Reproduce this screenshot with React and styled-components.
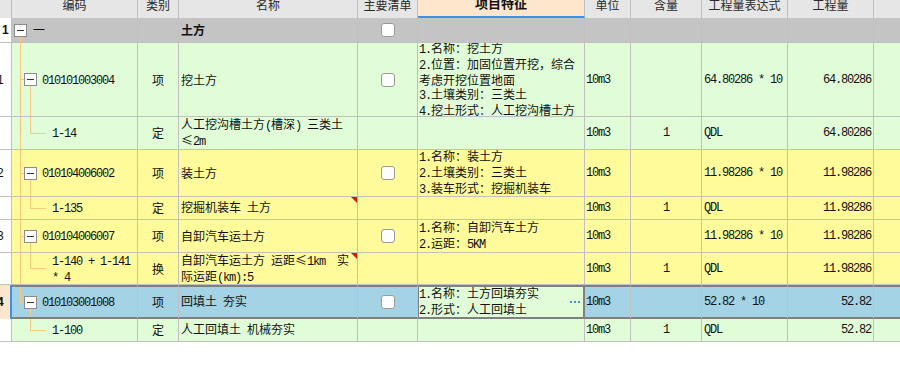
import React from 'react';
import styled, { createGlobalStyle, css } from 'styled-components';

const C = {
  border: '#c0c0c0',
  header: '#e6e6e6',
  group: '#c4c4c4',
  green: '#e1fdd8',
  yellow: '#fffb9b',
  blue: '#a3d3e5',
  tree: '#fdc77c',
  dark: '#808080',
  peach: '#fde6cb',
  accent: '#3d8fe8',
  text: '#111',
};

const GlobalStyle = createGlobalStyle`
  html, body { margin: 0; padding: 0; background: #fff; }
  body {
    font-family: "Noto Sans CJK SC", "Noto Sans", sans-serif;
    font-size: 12px;
    color: ${C.text};
  }
`;

const COLS = '12px 126px 41px 179px 60px 167px 46px 71px 86px 86px 26px';

const Table = styled.div`
  width: 900px;
`;

const Row = styled.div`
  display: grid;
  grid-template-columns: ${COLS};
  height: ${(p) => p.$h}px;
  background: ${(p) => p.$bg};
`;

const Cell = styled.div`
  box-sizing: border-box;
  display: flex;
  align-items: center;
  justify-content: ${(p) =>
    p.$align === 'center' ? 'center' : p.$align === 'right' ? 'flex-end' : 'flex-start'};
  padding: 0 ${(p) => p.$pr ?? 0}px 0 ${(p) => p.$pl ?? 0}px;
  border-right: 1px solid ${C.border};
  border-bottom: 1px solid ${C.border};
  overflow: hidden;
  position: relative;
  line-height: 14px;
  white-space: pre-wrap;
  font-weight: ${(p) => (p.$bold ? 700 : 400)};
  ${(p) =>
    p.$sel &&
    css`
      border-top: 2px solid ${C.dark};
      border-bottom: 2px solid ${C.dark};
    `}
  ${(p) =>
    p.$edit &&
    css`
      background: ${C.green};
      border-right: 2px solid ${C.dark};
      box-shadow: inset 1px 0 0 ${C.dark};
    `}
  ${(p) =>
    p.$last &&
    css`
      border-right: none;
    `}
`;

const HeadCell = styled(Cell)`
  border-bottom: none;
  align-items: flex-start;
  justify-content: center;
  background: ${(p) => (p.$focus ? C.peach : C.header)};
  color: #2a2a2a;
  line-height: 12px;
  ${(p) =>
    p.$focus &&
    css`
      border-bottom: 2px solid ${C.accent};
      font-weight: 700;
      font-size: 13px;
      color: #111;
    `}
`;

const HeadLabel = styled.span`
  margin-top: ${(p) => (p.$focus ? -3 : -1)}px;
`;

const NumCell = styled(Cell)`
  background: ${(p) => (p.$selRow ? C.peach : '#fff')};
  font-family: "Liberation Sans", sans-serif;
  font-weight: ${(p) => (p.$strong ? 700 : 400)};
  ${(p) =>
    p.$selRow &&
    css`
      border-right: 2px solid ${C.accent};
      border-bottom: none;
    `}
`;

const NumLabel = styled.span`
  margin-left: ${(p) => p.$shift}px;
  font-size: 12px;
`;

const CodeCell = styled(Cell)`
  align-items: stretch;
`;

const treeLine = `linear-gradient(${C.tree}, ${C.tree})`;

const Gutter = styled.div`
  flex: none;
  width: ${(p) => p.$w}px;
  background: ${({ $v, $vx, $h0, $h1 }) => {
    const layers = [];
    if ($v === 'full') layers.push(`${treeLine} ${$vx}px 0 / 1px 100% no-repeat`);
    if ($v === 'top') layers.push(`${treeLine} ${$vx}px 0 / 1px 50% no-repeat`);
    if ($h1) layers.push(`${treeLine} ${$h0}px 50% / ${$h1 - $h0}px 1px no-repeat`);
    return layers.length ? layers.join(', ') : 'none';
  }};
`;

const ToggleCol = styled.div`
  flex: none;
  width: 13px;
  margin-left: ${(p) => p.$ml || 0}px;
  display: flex;
  flex-direction: column;
`;

const Stem = styled.div`
  flex: 1;
  background: ${(p) => (p.$line ? `${treeLine} 6px 0 / 1px 100% no-repeat` : 'none')};
`;

const Toggle = styled.div`
  flex: none;
  box-sizing: border-box;
  width: 13px;
  height: 13px;
  border: 1px solid #8c8c8c;
  background: #fff;
  display: flex;
  align-items: center;
  justify-content: center;
  &::after {
    content: '';
    width: 7px;
    height: 1px;
    background: #333;
  }
`;

const CodeText = styled.span`
  align-self: center;
  margin-left: ${(p) => p.$ml || 0}px;
`;

const Lat = styled.span`
  font-family: "Liberation Mono", "DejaVu Sans Mono", monospace;
  font-size: 12px;
  letter-spacing: -1.2px;
`;

const Check = styled.span`
  flex: none;
  box-sizing: border-box;
  width: 14px;
  height: 14px;
  border: 1px solid #9a9a9a;
  border-radius: 3px;
  background: #fff;
`;

const Mark = styled.span`
  position: absolute;
  top: 0;
  right: 0;
  width: 0;
  height: 0;
  border-top: 6px solid #e81010;
  border-left: 6px solid transparent;
`;

const Dots = styled.span`
  flex: none;
  margin-left: auto;
  margin-right: 3px;
  width: 10px;
  height: 2px;
  background: linear-gradient(90deg, #4a8fdc 2px, transparent 2px) 0 0 / 4px 2px repeat-x;
`;

function rich(s) {
  if (!s) return null;
  return s
    .split(/([\x20-\x7e]+)/)
    .filter(Boolean)
    .map((part, i) =>
      /^[\x20-\x7e]+$/.test(part) ? (
        <Lat key={i}>{part}</Lat>
      ) : (
        <React.Fragment key={i}>{part}</React.Fragment>
      )
    );
}

const headers = [
  { label: '' },
  { label: '编码' },
  { label: '类别' },
  { label: '名称' },
  { label: '主要清单' },
  { label: '项目特征', focus: true },
  { label: '单位' },
  { label: '含量' },
  { label: '工程量表达式' },
  { label: '工程量' },
  { label: '', last: true },
];

const rows = [
  { type: 'group', h: 25, bg: C.group, num: '1', numShift: 2, numBold: true, code: '一', name: '土方', check: true },
  {
    type: 'item', h: 74, bg: C.green, num: '1', numShift: -3,
    code: '010101003004', kind: '项', name: '挖土方', check: true,
    feat: '1.名称：挖土方\n2.位置：加固位置开挖，综合\n考虑开挖位置地面\n3.土壤类别：三类土\n4.挖土形式：人工挖沟槽土方',
    unit: '10m3', expr: '64.80286 * 10', qty: '64.80286',
  },
  {
    type: 'child', h: 33, bg: C.green,
    code: '1-14', kind: '定', name: '人工挖沟槽土方(槽深) 三类土\n≤2m',
    unit: '10m3', amount: '1', expr: 'QDL', qty: '64.80286',
  },
  {
    type: 'item', h: 47, bg: C.yellow, num: '2', numShift: -3,
    code: '010104006002', kind: '项', name: '装土方', check: true,
    feat: '1.名称：装土方\n2.土壤类别：三类土\n3.装车形式：挖掘机装车',
    unit: '10m3', expr: '11.98286 * 10', qty: '11.98286',
  },
  {
    type: 'child', h: 23, bg: C.yellow, mark: true,
    code: '1-135', kind: '定', name: '挖掘机装车 土方',
    unit: '10m3', amount: '1', expr: 'QDL', qty: '11.98286',
  },
  {
    type: 'item', h: 33, bg: C.yellow, num: '3', numShift: -3,
    code: '010104006007', kind: '项', name: '自卸汽车运土方', check: true,
    feat: '1.名称：自卸汽车土方\n2.运距：5KM',
    unit: '10m3', expr: '11.98286 * 10', qty: '11.98286',
  },
  {
    type: 'child', h: 32, bg: C.yellow, mark: true,
    code: '1-140 + 1-141\n* 4', kind: '换', name: '自卸汽车运土方 运距≤1km  实\n际运距(km):5',
    unit: '10m3', amount: '1', expr: 'QDL', qty: '11.98286',
  },
  {
    type: 'item', h: 34, bg: C.blue, num: '4', numShift: -3, numBold: true, selected: true, last: true,
    code: '010103001008', kind: '项', name: '回填土 夯实', check: true,
    feat: '1.名称：土方回填夯实\n2.形式：人工回填土',
    unit: '10m3', expr: '52.82 * 10', qty: '52.82',
  },
  {
    type: 'child', h: 23, bg: C.green, parentLast: true,
    code: '1-100', kind: '定', name: '人工回填土 机械夯实',
    unit: '10m3', amount: '1', expr: 'QDL', qty: '52.82',
  },
];

function TreeCode({ row }) {
  if (row.type === 'group') {
    return (
      <>
        <ToggleCol $ml={2}>
          <Stem />
          <Toggle />
          <Stem $line />
        </ToggleCol>
        <CodeText $ml={6}>{rich(row.code)}</CodeText>
      </>
    );
  }
  if (row.type === 'item') {
    return (
      <>
        <Gutter $w={12} $vx={8} $v={row.last ? 'top' : 'full'} $h0={8} $h1={12} />
        <ToggleCol>
          <Stem />
          <Toggle />
          <Stem $line />
        </ToggleCol>
        <CodeText $ml={5}>{rich(row.code)}</CodeText>
      </>
    );
  }
  return (
    <>
      <Gutter $w={12} $vx={8} $v={row.parentLast ? 'none' : 'full'} />
      <Gutter $w={28} $vx={6} $v="top" $h0={6} $h1={22} />
      <CodeText>{rich(row.code)}</CodeText>
    </>
  );
}

function DataRow({ row }) {
  const sel = !!row.selected;
  return (
    <Row $h={row.h} $bg={row.bg}>
      <NumCell $selRow={sel} $strong={row.numBold}>
        {row.num && <NumLabel $shift={row.numShift}>{row.num}</NumLabel>}
      </NumCell>
      <CodeCell $sel={sel}>
        <TreeCode row={row} />
      </CodeCell>
      <Cell $sel={sel} $align="center">{rich(row.kind)}</Cell>
      <Cell $sel={sel} $pl={2} $bold={row.type === 'group'}>
        <span>{rich(row.name)}</span>
        {row.mark && <Mark />}
      </Cell>
      <Cell $sel={sel} $align="center">{row.check && <Check />}</Cell>
      <Cell $sel={sel} $edit={sel} $pl={1}>
        <span>{rich(row.feat)}</span>
        {sel && <Dots />}
      </Cell>
      <Cell $sel={sel} $pl={1}>{rich(row.unit)}</Cell>
      <Cell $sel={sel} $align="center">{rich(row.amount)}</Cell>
      <Cell $sel={sel} $pl={2}>{rich(row.expr)}</Cell>
      <Cell $sel={sel} $align="right" $pr={2}>{rich(row.qty)}</Cell>
      <Cell $sel={sel} $last />
    </Row>
  );
}

export default function App() {
  return (
    <>
      <GlobalStyle />
      <Table>
        <Row $h={18} $bg={C.header}>
          {headers.map((h, i) => (
            <HeadCell key={i} $focus={h.focus} $last={h.last}>
              {h.label && <HeadLabel $focus={h.focus}>{h.label}</HeadLabel>}
            </HeadCell>
          ))}
        </Row>
        {rows.map((r, i) => (
          <DataRow key={i} row={r} />
        ))}
      </Table>
    </>
  );
}
